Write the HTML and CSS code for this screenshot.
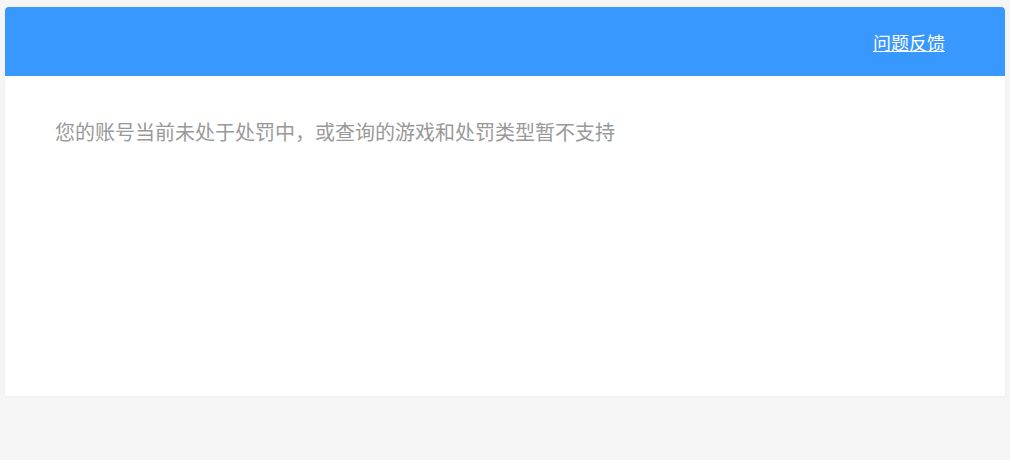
FILE: index.html
```html
<!DOCTYPE html>
<html lang="zh-CN">
<head>
<meta charset="utf-8">
<title>处罚查询</title>
<link rel="stylesheet" href="styles.css">
</head>
<body>
<div class="page">
  <div class="card">
    <div class="card-header">
      <a class="feedback" href="#">问题反馈</a>
    </div>
    <div class="card-body">
      <p class="message">您的账号当前未处于处罚中，或查询的游戏和处罚类型暂不支持</p>
    </div>
  </div>
</div>
</body>
</html>
```

FILE: styles.css
```css
html, body {
  margin: 0;
  padding: 0;
  background: #f5f5f5;
  font-family: "Microsoft YaHei", "Noto Sans CJK SC", "Noto Sans", sans-serif;
}
.page {
  padding: 7px 5px;
}
.card {
  background: #ffffff;
  height: 389px;
  border-radius: 4px 4px 2px 2px;
  overflow: hidden;
  box-shadow: 0 0 3px rgba(0, 0, 0, 0.04);
}
.card-header {
  height: 69px;
  background: #3998fe;
  display: flex;
  align-items: center;
  justify-content: flex-end;
  padding: 0 60px 0 0;
}
.feedback {
  color: #ffffff;
  font-size: 18px;
  line-height: 24px;
  text-decoration: underline;
}
.card-body {
  padding: 44px 0 0 50px;
}
.message {
  margin: 0;
  font-size: 20px;
  line-height: 24px;
  color: #999999;
}
```
